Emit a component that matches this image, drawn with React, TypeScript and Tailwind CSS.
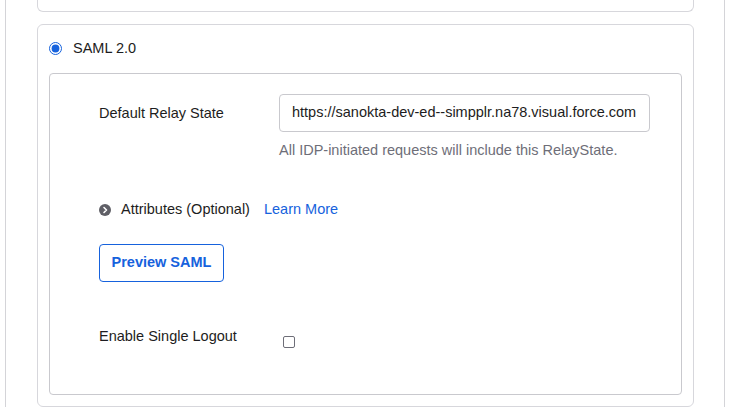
import React from 'react';

const font = { fontFamily: '"Liberation Sans", Arial, sans-serif' };

const App: React.FC = () => {
  return (
    <div className="h-[407px] w-[735px] overflow-hidden bg-white" style={font}>
      <div className="ml-[5px] h-full w-[720px] border-x border-[#d4d4d8] px-[31px]">
        {/* Previous card (cut off at the top) */}
        <div className="h-[12px] w-[657px] rounded-b-md border border-t-0 border-[#d7d7dc]" />

        {/* SAML 2.0 card */}
        <div className="mt-[12px] w-[657px] rounded-md border border-[#d7d7dc] px-[11px] pt-[16px]">
          <label className="flex h-[14px] items-center gap-[11px] text-[14.5px] leading-[14px] text-[#1d1d21]">
            <input type="radio" defaultChecked className="m-0 h-[13px] w-[13px] accent-[#1662dd]" />
            SAML 2.0
          </label>

          <div className="mt-[18px] h-[322px] rounded-sm border border-[#c9c9ce] pl-[49px] pt-[20px]">
            <div className="flex items-start">
              <div className="w-[180px] pt-[9px] text-[14.5px] text-[#1d1d21]">Default Relay State</div>
              <div>
                <div className="flex h-[38px] w-[371px] items-center rounded-[4px] border border-[#c9c9ce] px-[12px] text-[14.5px] text-[#1d1d21]">
                  https://sanokta-dev-ed--simpplr.na78.visual.force.com
                </div>
                <p className="mt-[8px] text-[14.5px] text-[#6e6e78]">All IDP-initiated requests will include this RelayState.</p>
              </div>
            </div>

            <div className="mt-[37px] flex items-center text-[14.5px]">
              <svg width="12" height="12" viewBox="0 0 12 12" className="mr-[10px]">
                <circle cx="6" cy="6" r="6" fill="#5f5f66" />
                <path d="M5 3.5 L7.5 6 L5 8.5" stroke="#fff" strokeWidth="1.6" fill="none" strokeLinecap="round" strokeLinejoin="round" />
              </svg>
              <span className="text-[#1d1d21]">Attributes (Optional)</span>
              <a className="ml-[14px] text-[#1662dd]">Learn More</a>
            </div>

            <button className="mt-[23px] h-[38px] w-[125px] rounded-[4px] border border-[#1662dd] text-[14.5px] font-bold text-[#1662dd]">
              Preview SAML
            </button>

            <div className="mt-[44px] flex items-start">
              <div className="w-[184px] text-[14.5px] text-[#1d1d21]">Enable Single Logout</div>
              <div className="mt-[10px] h-[12px] w-[12px] rounded-[2px] border border-[#6e6e78]" />
            </div>
          </div>
          <div className="h-[11px]" />
        </div>
      </div>
    </div>
  );
};

export default App;
